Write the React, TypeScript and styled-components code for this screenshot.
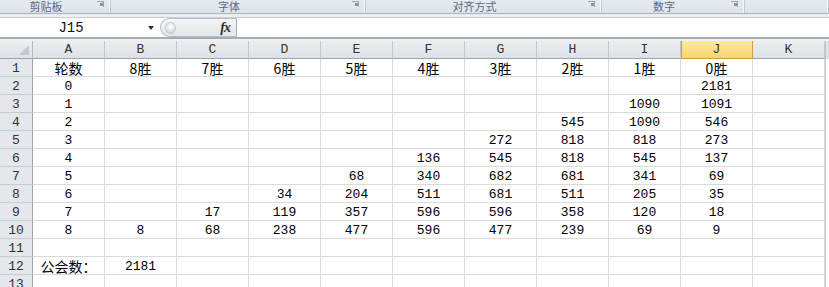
import React from 'react';
import styled, { createGlobalStyle, css } from 'styled-components';

const GlobalStyle = createGlobalStyle`
  html, body {
    margin: 0;
    padding: 0;
    width: 829px;
    height: 287px;
    overflow: hidden;
    background: #ffffff;
  }
`;

const latin = `'Liberation Mono', 'Noto Sans CJK SC', monospace`;
const cjk = `'Noto Sans CJK SC', 'Liberation Mono', sans-serif`;

const Page = styled.div`
  display: flex;
  flex-direction: column;
  width: 829px;
  height: 287px;
  overflow: hidden;
  & > * {
    flex: none;
  }
`;

/* ribbon group captions */
const RibbonBar = styled.div`
  display: flex;
  height: 13px;
  background: linear-gradient(#e6eaf0, #dfe4eb);
  border-bottom: 1px solid #a9b1bc;
  overflow: hidden;
`;

const RibbonGroup = styled.div<{ $width: number }>`
  position: relative;
  display: flex;
  justify-content: center;
  width: ${({ $width }) => $width}px;
  flex: none;
  padding-right: 18px;
  box-sizing: border-box;
  border-right: 1px solid #c3c9d2;
  box-shadow: inset -1px 0 0 #f7f8fa;
`;

const RibbonLabel = styled.span`
  font-family: ${cjk};
  font-size: 11px;
  line-height: 12px;
  margin-top: 0;
  color: #5a6b82;
`;

const Launcher = styled.span`
  position: absolute;
  right: 6px;
  top: 1px;
  width: 6px;
  height: 5px;
  border-top: 1px solid #9aa4b1;
  border-right: 1px solid #9aa4b1;
  &::after {
    content: '';
    position: absolute;
    right: 0;
    top: 1px;
    width: 3px;
    height: 3px;
    background: #8893a1;
  }
`;

const Spacer = styled.div`
  height: 3px;
  background: #eceef2;
`;

const FormulaBar = styled.div`
  display: flex;
  height: 19px;
  background: #ffffff;
  border-top: 1px solid #c8ccd3;
`;

const NameBox = styled.div`
  position: relative;
  display: flex;
  align-items: center;
  justify-content: center;
  width: 160px;
  flex: none;
  padding-right: 18px;
  box-sizing: border-box;
  font-family: ${latin};
  font-size: 14px;
  color: #111;
`;

const DropArrow = styled.span`
  position: absolute;
  right: 6px;
  top: 8px;
  border-left: 3px solid transparent;
  border-right: 3px solid transparent;
  border-top: 4px solid #333;
`;

const Capsule = styled.div`
  display: flex;
  align-items: center;
  justify-content: space-between;
  width: 77px;
  flex: none;
  padding: 0 6px 0 4px;
  box-sizing: border-box;
  border-radius: 10px 0 0 10px;
  border: 1px solid #b9bec6;
  border-right-color: #a7adb6;
  background: linear-gradient(#f4f5f7, #e3e6ea);
`;

const Knob = styled.span`
  width: 9px;
  height: 10px;
  border-radius: 50%;
  border: 1px solid #c4c8ce;
  background: radial-gradient(circle at 50% 35%, #ffffff, #c9cdd3);
`;

const Fx = styled.span`
  font-family: 'Liberation Serif', serif;
  font-style: italic;
  font-weight: bold;
  font-size: 14px;
  letter-spacing: -1px;
  color: #333;
`;

const FormulaInput = styled.div`
  flex: 1;
  background: #ffffff;
`;

const Divider = styled.div`
  height: 4px;
  box-sizing: border-box;
  border-top: 2px solid #a6adb7;
  background: #eef0f3;
`;

const Sheet = styled.div`
  display: grid;
  grid-template-columns: 33px repeat(11, 72px) 1fr;
  grid-auto-rows: 18px;
`;

const headerBase = css`
  display: flex;
  align-items: center;
  justify-content: center;
  box-sizing: border-box;
  font-family: ${latin};
  font-size: 13px;
  color: #333;
`;

const Corner = styled.div`
  position: relative;
  ${headerBase};
  background: linear-gradient(#eceef1, #dfe2e7);
  border-right: 1px solid #b4bac3;
  border-bottom: 1px solid #9aa3ae;
  &::after {
    content: '';
    position: absolute;
    right: 3px;
    bottom: 3px;
    border-left: 10px solid transparent;
    border-bottom: 10px solid #c3c8cf;
  }
`;

const ColHead = styled.div<{ $active?: boolean }>`
  ${headerBase};
  background: ${({ $active }) =>
    $active ? 'linear-gradient(#fde9a6, #f9d46c)' : 'linear-gradient(#eceef1, #dee2e7)'};
  border-right: 1px solid ${({ $active }) => ($active ? '#d39c42' : '#c1c7cf')};
  border-bottom: 1px solid ${({ $active }) => ($active ? '#d39c42' : '#9aa3ae')};
  ${({ $active }) => $active && 'box-shadow: inset 1px 0 0 #d39c42;'}
`;

const RowHead = styled.div`
  ${headerBase};
  background: #e4e7ec;
  border-right: 1px solid #9aa3ae;
  border-bottom: 1px solid #c7ccd3;
  padding-top: 2px;
`;

const Cell = styled.div<{ $cjk?: boolean }>`
  display: flex;
  align-items: flex-end;
  justify-content: center;
  box-sizing: border-box;
  border-right: 1px solid #d9dadb;
  border-bottom: 1px solid #d9dadb;
  font-family: ${({ $cjk }) => ($cjk ? cjk : latin)};
  font-size: ${({ $cjk }) => ($cjk ? '14px' : '13px')};
  line-height: ${({ $cjk }) => ($cjk ? '15px' : '13px')};
  padding-bottom: ${({ $cjk }) => ($cjk ? '0' : '1px')};
  color: #000;
  white-space: nowrap;
  overflow: hidden;
`;

const Tail = styled.div<{ $head?: boolean }>`
  background: ${({ $head }) => ($head ? '#dee2e7' : '#ffffff')};
  border-left: 1px solid #c1c7cf;
`;

const groups = [
  { label: '剪贴板', width: 111 },
  { label: '字体', width: 255 },
  { label: '对齐方式', width: 236 },
  { label: '数字', width: 143 },
  { label: '', width: 84 },
];

const columns = ['A', 'B', 'C', 'D', 'E', 'F', 'G', 'H', 'I', 'J', 'K'];

const rows: string[][] = [
  ['轮数', '8胜', '7胜', '6胜', '5胜', '4胜', '3胜', '2胜', '1胜', '0胜', ''],
  ['0', '', '', '', '', '', '', '', '', '2181', ''],
  ['1', '', '', '', '', '', '', '', '1090', '1091', ''],
  ['2', '', '', '', '', '', '', '545', '1090', '546', ''],
  ['3', '', '', '', '', '', '272', '818', '818', '273', ''],
  ['4', '', '', '', '', '136', '545', '818', '545', '137', ''],
  ['5', '', '', '', '68', '340', '682', '681', '341', '69', ''],
  ['6', '', '', '34', '204', '511', '681', '511', '205', '35', ''],
  ['7', '', '17', '119', '357', '596', '596', '358', '120', '18', ''],
  ['8', '8', '68', '238', '477', '596', '477', '239', '69', '9', ''],
  ['', '', '', '', '', '', '', '', '', '', ''],
  ['公会数：', '2181', '', '', '', '', '', '', '', '', ''],
  ['', '', '', '', '', '', '', '', '', '', ''],
];

const hasCjk = (s: string) => /[\u3000-\u9fff\uff00-\uffef]/.test(s);

export default function App() {
  return (
    <>
      <GlobalStyle />
      <Page>
        <RibbonBar>
          {groups.map(g => (
            <RibbonGroup key={g.width} $width={g.width}>
              <RibbonLabel>{g.label}</RibbonLabel>
              {g.label && <Launcher />}
            </RibbonGroup>
          ))}
        </RibbonBar>
        <Spacer />
        <FormulaBar>
          <NameBox>
            J15
            <DropArrow />
          </NameBox>
          <Capsule>
            <Knob />
            <Fx>fx</Fx>
          </Capsule>
          <FormulaInput />
        </FormulaBar>
        <Divider />
        <Sheet>
          <Corner />
          {columns.map(c => (
            <ColHead key={c} $active={c === 'J'}>
              {c}
            </ColHead>
          ))}
          <Tail $head />
          {rows.map((row, r) => (
            <React.Fragment key={r}>
              <RowHead>{r + 1}</RowHead>
              {row.map((v, c) => (
                <Cell key={c} $cjk={hasCjk(v)}>
                  {v}
                </Cell>
              ))}
              <Tail />
            </React.Fragment>
          ))}
        </Sheet>
      </Page>
    </>
  );
}
